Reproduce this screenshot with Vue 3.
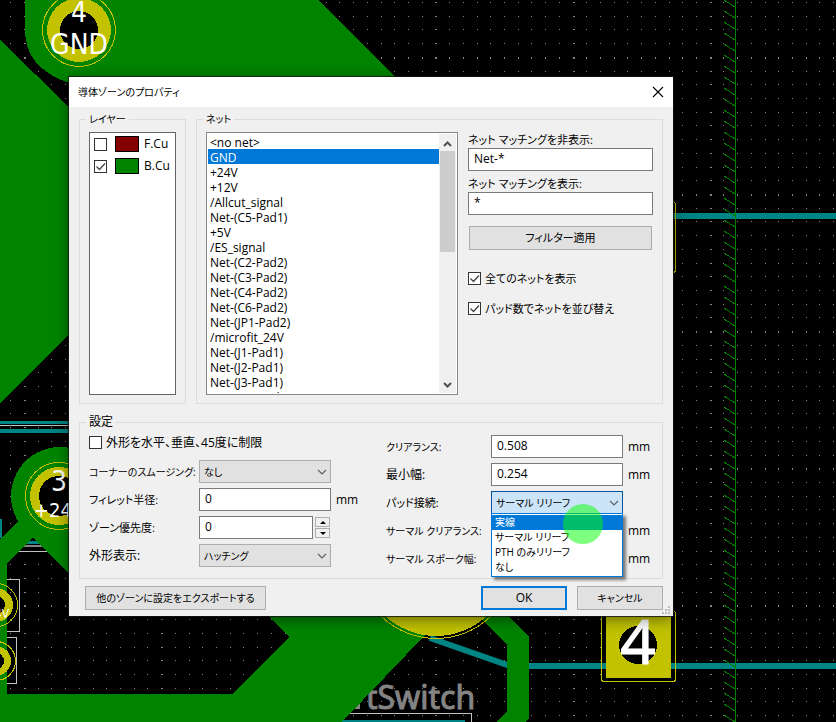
<script setup>
import { ref } from 'vue'

const PITCH = 13.715
const dots = []
for (let i = -1; i < 120; i++) {
  for (let j = 0; j < 90; j++) {
    dots.push({
      x: Math.round(24 + i * PITCH),
      y: Math.round(2 + j * PITCH),
      w: i % 10 === 0 ? 2 : 1,
      h: j % 10 === 4 ? 2 : 1,
    })
  }
}
const dotPath = dots.map((d) => `M${d.x} ${d.y}h${d.w}v${d.h}h-${d.w}z`).join('')
const hatchPath = Array.from({ length: 110 }, (_, k) => `M724 ${k * 11}l11 7`).join('')

const layers = ref([
  { name: 'F.Cu', on: false, cls: 'front' },
  { name: 'B.Cu', on: true, cls: 'back' },
])
const nets = [
  '<no net>', 'GND', '+24V', '+12V', '/Allcut_signal', 'Net-(C5-Pad1)', '+5V', '/ES_signal',
  'Net-(C2-Pad2)', 'Net-(C3-Pad2)', 'Net-(C4-Pad2)', 'Net-(C6-Pad2)', 'Net-(JP1-Pad2)',
  '/microfit_24V', 'Net-(J1-Pad1)', 'Net-(J2-Pad1)', 'Net-(J3-Pad1)', 'Net-(J10-Pad1)',
]
const net = ref('GND')
const hideFilter = ref('Net-*')
const showFilter = ref('*')
const showAll = ref(true)
const sortByPads = ref(true)
const constrain = ref(false)
const smoothing = ref('なし')
const fillet = ref('0')
const priority = ref(0)
const outline = ref('ハッチング')
const clearance = ref('0.508')
const minWidth = ref('0.254')
const thermalClearance = ref('')
const spokeWidth = ref('')
const padModes = ['実線', 'サーマル リリーフ', 'PTH のみリリーフ', 'なし']
const padMode = ref('サーマル リリーフ')
const hovered = ref('実線')
</script>

<template>
  <main class="stage">
    <svg class="board" aria-hidden="true">
      <path :d="dotPath" fill="#848484" shape-rendering="crispEdges" />
      <g shape-rendering="crispEdges">
        <path d="M0 422.5h200M0 431h200" stroke="#008484" stroke-width="3" />
        <path d="M0 431h200" stroke="#008484" stroke-width="4" />
        <path d="M0 425.500h200" stroke="#c2c2c2" />
        <path d="M0 519h2v19h-2z" fill="#008484" />
        <path d="M8 542.500h40" stroke="#008484" stroke-width="3" />
        <path d="M8 546h40" stroke="#848484" stroke-width="2" />
        <path d="M8 551.500h39" stroke="#c2c2c2" />
        <path d="M0 579.500h19.500v52H0M0 637.500h16.500v46H0" fill="none" stroke="#c2c2c2" />
        <path d="M340 713.500h131.500v20" fill="none" stroke="#c2c2c2" />
        <path d="M335 720h130v40h-130z" fill="#008484" />
        <path d="M673 216h2000M528 666h2000" stroke="#008484" stroke-width="6" />
      </g>
      <path d="M354 709l6-8v8z" fill="#848484" />
      <path d="M430 638l80 28" stroke="#008484" stroke-width="6" />
      <text x="366" y="709" class="silk">tSwitch</text>
      <g fill="#008400" shape-rendering="crispEdges">
        <path d="M25 0H318L420 102V300H103L0 403V40L69 107V83Q25 68 25 30z" />
        <path d="M0 694H232L280 646L289 637L240 588H470L342 722V1200H0z" />
        <path d="M470 608H500L529 637V718L526 722H496L507 711V645z" />
        <circle cx="60" cy="496" r="49" />
        <path d="M18 521L0 540V694H7V563L33 538L69 573V510z" />
        <path :d="hatchPath" stroke="#008400" fill="none" />
        <path d="M735 0h1v1200h-1z" />
      </g>
      <g fill="#c2c200" shape-rendering="crispEdges">
        <circle cx="79" cy="30" r="32" />
        <circle cx="59" cy="496" r="29" />
        <circle cx="436" cy="561" r="75" />
        <circle cx="-4" cy="605" r="17" />
        <circle cx="-4" cy="661" r="15" />
        <path d="M606 605h65v73h-65z" />
      </g>
      <g fill="none" stroke="#c2c200" shape-rendering="crispEdges">
        <circle cx="79" cy="30" r="36.500" />
        <circle cx="59" cy="496" r="33.500" />
        <circle cx="436" cy="560" r="78.500" />
        <circle cx="-4" cy="605" r="21.500" />
        <circle cx="-4" cy="661" r="19.500" />
        <rect x="601.500" y="610.500" width="74" height="71" rx="3" />
        <rect x="601.500" y="201.500" width="74" height="71" rx="3" />
      </g>
      <g fill="#000" shape-rendering="crispEdges">
        <circle cx="79" cy="30" r="19" />
        <circle cx="59" cy="496" r="20" />
        <circle cx="-4" cy="605" r="9" />
        <circle cx="-4" cy="661" r="8" />
        <circle cx="638" cy="645" r="19" />
      </g>
      <g class="pads">
        <text x="79" y="22">4</text>
        <text x="79" y="54">GND</text>
        <text x="59" y="491">3</text>
        <text x="59" y="517" class="mid">+24V</text>
        <text x="2" y="618" class="tiny">4V</text>
        <text x="638" y="664" class="big">4</text>
      </g>
    </svg>

    <section class="dialog" role="dialog" aria-labelledby="dlg-title">
      <header class="titlebar">
        <h1 id="dlg-title" class="kana">導体ゾーンのプロパティ</h1>
        <button type="button" class="close" aria-label="閉じる">
          <svg width="12" height="12" viewBox="0 0 12 12"><path d="M1 1l10 10M11 1L1 11" stroke="#000" stroke-width="1.100" /></svg>
        </button>
      </header>

      <form class="body" @submit.prevent>
        <div class="top">
          <fieldset class="group">
            <legend class="kana">レイヤー</legend>
            <div class="layers">
              <label v-for="l in layers" :key="l.name" class="layer">
                <input v-model="l.on" type="checkbox" class="tick" />
                <span class="swatch" :class="l.cls"></span>
                <span>{{ l.name }}</span>
              </label>
            </div>
          </fieldset>

          <fieldset class="group nets">
            <legend class="kana">ネット</legend>
            <div class="netgrid">
              <div class="listbox">
                <select v-model="net" size="17" aria-label="ネット">
                  <option v-for="n in nets" :key="n" :value="n">{{ n }}</option>
                </select>
                <div class="scroll">
                  <svg width="9" height="6" viewBox="0 0 9 6"><path d="M1 5l3.500-3.500L8 5" /></svg>
                  <div class="thumb"></div>
                  <svg width="9" height="6" viewBox="0 0 9 6"><path d="M1 1l3.500 3.500L8 1" /></svg>
                </div>
              </div>
              <div class="filters">
                <label for="hide" class="mixed">ネット マッチングを非表示:</label>
                <input id="hide" v-model="hideFilter" type="text" class="field" />
                <label for="show" class="mixed second">ネット マッチングを表示:</label>
                <input id="show" v-model="showFilter" type="text" class="field" />
                <button type="button" class="btn mixed apply">フィルター適用</button>
                <label class="check mixed"><input v-model="showAll" type="checkbox" class="tick" />全てのネットを表示</label>
                <label class="check mixed"><input v-model="sortByPads" type="checkbox" class="tick" />パッド数でネットを並び替え</label>
              </div>
            </div>
          </fieldset>
        </div>

        <fieldset class="group settings">
          <legend>設定</legend>
          <div class="columns">
            <div class="left">
              <label class="check"><input v-model="constrain" type="checkbox" class="tick" />外形を水平、垂直、45度に制限</label>
              <div class="rows">
                <label for="smooth" class="kana">コーナーのスムージング:</label>
                <div class="combo kana">
                  <select id="smooth" v-model="smoothing"><option>なし</option></select>
                  <svg class="chev" width="10" height="6" viewBox="0 0 10 6"><path d="M1 1l4 4 4-4" /></svg>
                </div>
                <span></span>
                <label for="fillet" class="mixed">フィレット半径:</label>
                <input id="fillet" v-model="fillet" type="text" class="field" />
                <span class="unit">mm</span>
                <label for="prio" class="mixed">ゾーン優先度:</label>
                <div class="spin">
                  <input id="prio" v-model="priority" type="text" class="field" />
                  <div class="steps">
                    <button type="button" aria-label="増やす" @click="priority++"><svg width="6" height="3" viewBox="0 0 6 3"><path d="M0 3l3-3 3 3z" /></svg></button>
                    <button type="button" aria-label="減らす" @click="priority--"><svg width="6" height="3" viewBox="0 0 6 3"><path d="M0 0l3 3 3-3z" /></svg></button>
                  </div>
                </div>
                <span></span>
                <label for="outl">外形表示:</label>
                <div class="combo kana">
                  <select id="outl" v-model="outline"><option>ハッチング</option></select>
                  <svg class="chev" width="10" height="6" viewBox="0 0 10 6"><path d="M1 1l4 4 4-4" /></svg>
                </div>
                <span></span>
              </div>
            </div>

            <div class="rows right">
              <label for="clr" class="kana">クリアランス:</label>
              <input id="clr" v-model="clearance" type="text" class="field" />
              <span class="unit">mm</span>
              <label for="minw">最小幅:</label>
              <input id="minw" v-model="minWidth" type="text" class="field" />
              <span class="unit">mm</span>
              <label for="pad" class="mixed">パッド接続:</label>
              <div class="combo open kana">
                <select id="pad" v-model="padMode">
                  <option v-for="m in padModes" :key="m">{{ m }}</option>
                </select>
                <svg class="chev" width="10" height="6" viewBox="0 0 10 6"><path d="M1 1l4 4 4-4" /></svg>
                <ul class="menu" role="listbox" aria-label="パッド接続">
                  <li v-for="m in padModes" :key="m" role="option" :class="{ hot: m === hovered }" @mouseenter="hovered = m">{{ m }}</li>
                </ul>
                <span class="pointer"></span>
              </div>
              <span></span>
              <label for="tclr" class="kana">サーマル クリアランス:</label>
              <input id="tclr" v-model="thermalClearance" type="text" class="field" />
              <span class="unit">mm</span>
              <label for="spoke" class="kana">サーマル スポーク幅:</label>
              <input id="spoke" v-model="spokeWidth" type="text" class="field" />
              <span class="unit">mm</span>
            </div>
          </div>
        </fieldset>

        <footer class="footer">
          <button type="button" class="btn kana export">他のゾーンに設定をエクスポートする</button>
          <span class="grow"></span>
          <button type="submit" class="btn ok">OK</button>
          <button type="button" class="btn kana">キャンセル</button>
        </footer>
      </form>
      <svg class="grip" width="8" height="8" viewBox="0 0 8 8" aria-hidden="true">
        <path d="M6 0h2v2H6zM3 3h2v2H3zM6 3h2v2H6zM0 6h2v2H0zM3 6h2v2H3zM6 6h2v2H6z" fill="#bfbfbf" />
      </svg>
    </section>
  </main>
</template>

<style>
body {
  background: #000;
}
</style>

<style scoped>
* {
  box-sizing: border-box;
}
.stage {
  position: relative;
  min-height: 100vh;
  padding: 77px 163px 106px 69px;
  overflow: hidden;
  background: #000;
  color: #000;
  font: 12px/16px "Open Sans", "Noto Sans CJK JP", sans-serif;
  font-feature-settings: "palt";
}
.board {
  position: absolute;
  inset: 0;
  width: 100%;
  height: 100%;
}
.silk {
  font: 32px "Noto Sans", sans-serif;
  fill: #848484;
  stroke: #848484;
}
.pads text {
  font: 28px "DejaVu Sans Condensed", "DejaVu Sans", sans-serif;
  fill: #fff;
  text-anchor: middle;
}
.pads .mid {
  font-size: 20px;
}
.pads .tiny {
  font-size: 12px;
}
.pads .big {
  font: 62px "Noto Sans", sans-serif;
  stroke: #fff;
}
.dialog {
  position: relative;
  background: #f0f0f0;
  box-shadow: 0 0 0 1px rgba(20, 20, 20, 0.8), 0 3px 14px rgba(0, 0, 0, 0.5);
}
.titlebar {
  display: flex;
  align-items: center;
  justify-content: space-between;
  height: 30px;
  padding: 0 9px;
  background: #fff;
}
h1 {
  margin: 0;
  font-size: 12px;
  font-weight: 400;
}
.close {
  display: flex;
  padding: 0;
  border: 0;
  background: none;
}
.body {
  padding: 4px 10px 6px;
}
.group {
  min-width: 0;
  margin: 0;
  padding: 5px 9px 8px;
  border: 1px solid #dcdcdc;
}
legend {
  height: 16px;
  margin-left: -3px;
  padding: 0 3px;
}
.top {
  display: flex;
  gap: 10px;
  margin-bottom: 10px;
}
.nets {
  flex: 1;
}
.layers {
  display: flex;
  flex-direction: column;
  gap: 6px;
  width: 87px;
  height: 263px;
  padding: 3px 4px;
  border: 1px solid #646464;
  background: #fff;
}
.layer {
  display: flex;
  align-items: center;
}
.tick {
  flex: none;
  width: 13px;
  height: 13px;
  margin: 0;
  appearance: none;
  border: 1px solid #333;
  background: #fff;
}
.tick:checked {
  background: url("data:image/svg+xml,%3Csvg xmlns='http://www.w3.org/2000/svg' viewBox='0 0 11 11'%3E%3Cpath d='M1.500 5.500l3 3L10 2.500' fill='none' stroke='%23444' stroke-width='1.300'/%3E%3C/svg%3E") #fff;
}
.swatch {
  width: 24px;
  height: 16px;
  margin: 0 5px 0 8px;
  border: 1px solid #000;
}
.front {
  background: #840000;
}
.back {
  background: #008400;
}
.netgrid {
  display: grid;
  grid-template-columns: minmax(0, 252fr) minmax(0, 185fr);
  gap: 10px;
}
.listbox {
  display: flex;
  height: 263px;
  padding: 1px;
  border: 1px solid #828790;
  background: #fff;
}
.listbox select {
  flex: 1;
  min-width: 0;
  height: 100%;
  padding: 0;
  border: 0;
  outline: 0;
  border-radius: 0;
  overflow: hidden;
  background: #fff;
  color: #000;
  font: inherit;
}
.listbox select::-webkit-scrollbar {
  display: none;
}
.listbox option {
  height: 15px;
  min-height: 15px;
  padding: 0 2px 2px;
  line-height: 13px;
}
.listbox option:checked {
  background: linear-gradient(#0078d7, #0078d7);
  color: #fff !important;
}
.scroll {
  display: flex;
  flex-direction: column;
  align-items: center;
  width: 17px;
  padding: 7px 0 5px;
  background: #f0f0f0;
}
.scroll path {
  fill: none;
  stroke: #505050;
  stroke-width: 2;
}
.thumb {
  width: 15px;
  height: 101px;
  margin: 4px 0 auto;
  background: #cdcdcd;
}
.filters {
  display: flex;
  flex-direction: column;
}
.second {
  margin-top: 5px;
}
.field {
  width: 100%;
  min-width: 0;
  height: 23px;
  margin: 0;
  padding: 0 5px 2px;
  border: 1px solid #7a7a7a;
  border-radius: 0;
  background: #fff;
  color: #000;
  font: inherit;
}
.btn {
  height: 24px;
  padding: 0;
  border: 1px solid #adadad;
  border-radius: 0;
  background: #e1e1e1;
  color: #000;
  font: inherit;
  font-feature-settings: inherit;
  white-space: nowrap;
}
.apply {
  margin: 11px 1px 6px;
}
.check {
  display: flex;
  align-items: center;
  gap: 4px;
  height: 15px;
  white-space: nowrap;
}
.filters .check {
  margin-top: 15px;
}
.columns {
  display: grid;
  grid-template-columns: minmax(0, 1fr) minmax(0, 1fr);
  gap: 30px;
}
.rows {
  display: grid;
  grid-template-columns: 105px minmax(0, 1fr) 20px;
  gap: 5px;
  align-items: center;
  grid-auto-rows: 23px;
  white-space: nowrap;
}
.left .rows {
  margin-top: 10px;
}
.right {
  grid-template-columns: 100px minmax(0, 1fr) 25px;
}
.combo {
  position: relative;
}
.combo select {
  display: block;
  width: 100%;
  height: 23px;
  padding: 0 4px;
  appearance: none;
  border: 1px solid #adadad;
  border-radius: 0;
  background: #e1e1e1;
  color: #000;
  font: inherit;
  font-feature-settings: inherit;
}
.combo.open select {
  border-color: #005499;
  background: #cce4f7;
}
.chev {
  position: absolute;
  top: 9px;
  right: 4px;
  fill: none;
  stroke: #606060;
  stroke-width: 1.2;
  pointer-events: none;
}
.menu {
  position: absolute;
  z-index: 2;
  top: 22px;
  left: 0;
  right: 0;
  margin: 0;
  padding: 1px 0;
  border: 1px solid #0078d7;
  background: #fff;
  box-shadow: 3px 3px 3px rgba(0, 0, 0, 0.5);
  list-style: none;
}
.menu li {
  height: 15px;
  padding: 0 3px;
  line-height: 15px;
}
.menu .hot {
  background: #0078d7;
  color: #fff;
}
.pointer {
  position: absolute;
  z-index: 3;
  top: 13px;
  left: 72px;
  width: 40px;
  height: 40px;
  border-radius: 50%;
  background: rgba(0, 255, 0, 0.5);
  pointer-events: none;
}
.spin {
  display: flex;
  gap: 2px;
}
.steps {
  display: flex;
  flex-direction: column;
  gap: 1px;
  padding: 1px 1px 1px 0;
}
.steps button {
  display: flex;
  align-items: center;
  justify-content: center;
  width: 15px;
  height: 10px;
  padding: 0;
  border: 1px solid #adadad;
  background: #f0f0f0;
}
.footer {
  display: flex;
  gap: 10px;
  padding: 7px 0 0 6px;
}
.footer .btn {
  width: 86px;
}
.footer .export {
  width: 181px;
}
.grow {
  flex: 1;
}
.footer .ok {
  border: 2px solid #0078d7;
}
.mixed {
  font-size: 11px;
}
.kana {
  font-size: 10px;
}
.grip {
  position: absolute;
  right: 3px;
  bottom: 2px;
}
</style>
